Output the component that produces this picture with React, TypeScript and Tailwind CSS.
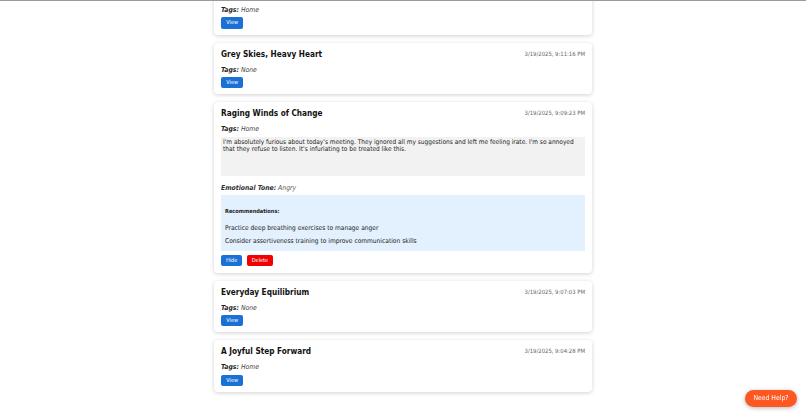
import React from "react";

type Entry = {
  title: string;
  date: string;
  tags: string;
  expanded?: boolean;
  text?: string;
  tone?: string;
  recs?: string[];
};

const entries: Entry[] = [
  { title: "Sunlight Through the Clouds", date: "3/19/2025, 9:14:02 PM", tags: "Home" },
  { title: "Grey Skies, Heavy Heart", date: "3/19/2025, 9:11:16 PM", tags: "None" },
  {
    title: "Raging Winds of Change",
    date: "3/19/2025, 9:09:23 PM",
    tags: "Home",
    expanded: true,
    text: "I'm absolutely furious about today's meeting. They ignored all my suggestions and left me feeling irate. I'm so annoyed that they refuse to listen. It's infuriating to be treated like this.",
    tone: "Angry",
    recs: [
      "Practice deep breathing exercises to manage anger",
      "Consider assertiveness training to improve communication skills",
    ],
  },
  { title: "Everyday Equilibrium", date: "3/19/2025, 9:07:03 PM", tags: "None" },
  { title: "A Joyful Step Forward", date: "3/19/2025, 9:04:28 PM", tags: "Home" },
];

function Card({ e, first }: { e: Entry; first?: boolean }) {
  return (
    <div
      className={`bg-white rounded-[4px] shadow-[0_1px_4px_rgba(0,0,0,0.18)] px-[7px] pt-[6px] ${
        e.expanded ? "pb-[6.5px]" : "pb-[6px]"
      } ${first ? "-mt-[17.3px]" : ""}`}
    >
      <div className="flex items-center justify-between h-[11px]">
        <div className="text-[8.2px] leading-[11px] font-bold text-[#111]">{e.title}</div>
        <div className="text-[5.9px] leading-[11px] text-[#666]">{e.date}</div>
      </div>
      <div className="mt-[6px] h-[8px] text-[6.8px] leading-[8px] italic text-[#444]">
        <span className="font-bold text-[#222]">Tags:</span> {e.tags}
      </div>
      {e.expanded ? (
        <>
          <div className="mt-[3.6px] h-[38.7px] bg-[#f2f2f2] px-[2px] pt-[1.5px] text-[6.5px] leading-[7.7px] text-[#222]">
            {e.text}
          </div>
          <div className="mt-[8px] h-[9px] text-[6.8px] leading-[9px] italic text-[#555]">
            <span className="font-bold text-[#333]">Emotional Tone:</span> {e.tone}
          </div>
          <div className="mt-[2px] h-[56px] bg-[#e3f0fd] px-[4px] pt-[13.5px] text-[#222]">
            <div className="font-bold text-[5.6px] leading-[7px]">Recommendations:</div>
            <div className="mt-[9.3px] text-[6.6px] leading-[7px]">{e.recs![0]}</div>
            <div className="mt-[6px] text-[6.6px] leading-[7px]">{e.recs![1]}</div>
          </div>
          <div className="mt-[4.3px] flex gap-[4.3px]">
            <button className="w-[21.3px] h-[11px] rounded-[2px] bg-[#1a70d4] text-white text-[5.5px] leading-[11px] text-center">
              Hide
            </button>
            <button className="w-[26.7px] h-[11px] rounded-[2px] bg-[#f00000] text-white text-[5.5px] leading-[11px] text-center">
              Delete
            </button>
          </div>
        </>
      ) : (
        <div className="mt-[3.5px]">
          <button className="w-[22.3px] h-[11.4px] rounded-[2px] bg-[#1a70d4] text-white text-[5.5px] leading-[11.4px] text-center block">
            View
          </button>
        </div>
      )}
    </div>
  );
}

export default function App() {
  return (
    <div
      className="min-h-screen bg-white overflow-hidden"
      style={{ fontFamily: '"DejaVu Sans Condensed", "Liberation Sans", sans-serif' }}
    >
      <div className="fixed top-0 inset-x-0 h-px bg-[#9a9a9a] z-10" />
      <div className="w-[378px] mx-auto flex flex-col gap-[8px]">
        {entries.map((e, i) => (
          <Card key={i} e={e} first={i === 0} />
        ))}
      </div>
      <button className="fixed right-[9px] bottom-[10px] w-[52px] h-[17px] rounded-full bg-[#ff5722] text-white text-[6.8px] leading-[17px] text-center shadow-[0_1px_4px_rgba(0,0,0,0.3)]">
        Need Help?
      </button>
    </div>
  );
}
